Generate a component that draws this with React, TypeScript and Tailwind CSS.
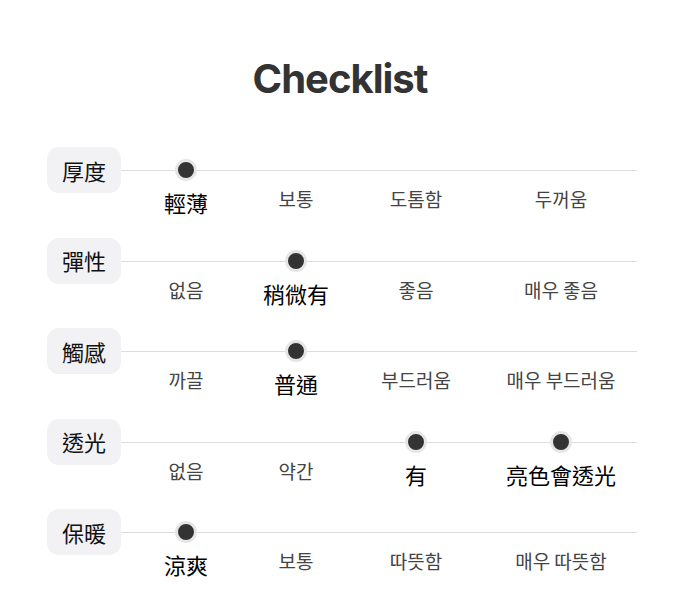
interface ChecklistRow {
  label: string;
  options: string[];
  selected: number[];
}

const rows: ChecklistRow[] = [
  { label: '厚度', options: ['輕薄', '보통', '도톰함', '두꺼움'], selected: [0] },
  { label: '彈性', options: ['없음', '稍微有', '좋음', '매우 좋음'], selected: [1] },
  { label: '觸感', options: ['까끌', '普通', '부드러움', '매우 부드러움'], selected: [1] },
  { label: '透光', options: ['없음', '약간', '有', '亮色會透光'], selected: [2, 3] },
  { label: '保暖', options: ['涼爽', '보통', '따뜻함', '매우 따뜻함'], selected: [0] },
];

const cols = 'grid grid-cols-[130px_90px_150px_140px]';

const App = () => {
  return (
    <div className="min-h-[614px] w-[680px] bg-white pt-[55px] font-['Noto_Sans_CJK_TC','Noto_Sans_CJK_KR',sans-serif]">
      <h1 className="text-center font-['Inter',sans-serif] text-[40px] leading-[48px] font-bold tracking-tight text-[#333333]">
        Checklist
      </h1>

      <div className="mt-[44px] flex flex-col gap-[19.5px] pl-[47px]">
        {rows.map((row) => (
          <div key={row.label} className="flex items-start">
            <div className="flex h-[46px] w-[74px] shrink-0 items-center justify-center rounded-xl bg-[#f2f2f4] text-[22px] text-[#111111]">
              {row.label}
            </div>

            <div className="w-[516px]">
              {/* track */}
              <div className="relative h-[46px]">
                <div className="absolute top-1/2 right-0 left-0 h-px bg-[#dddddd]" />
                <div className={`${cols} relative h-full items-center`}>
                  {row.options.map((opt, i) => (
                    <div key={opt + i} className="flex justify-center">
                      {row.selected.includes(i) && (
                        <span className="block h-[22px] w-[22px] rounded-full border-[3px] border-[#e6e6e8] bg-[#333333]" />
                      )}
                    </div>
                  ))}
                </div>
              </div>

              {/* options */}
              <div className={`${cols} -mt-[7px] items-start`}>
                {row.options.map((opt, i) =>
                  row.selected.includes(i) ? (
                    <span key={opt + i} className="text-center text-[22px] leading-[32px] font-normal text-black">
                      {opt}
                    </span>
                  ) : (
                    <span key={opt + i} className="text-center text-[19px] leading-[26px] text-[#444444]">
                      {opt}
                    </span>
                  )
                )}
              </div>
            </div>
          </div>
        ))}
      </div>
    </div>
  );
};

export default App;
